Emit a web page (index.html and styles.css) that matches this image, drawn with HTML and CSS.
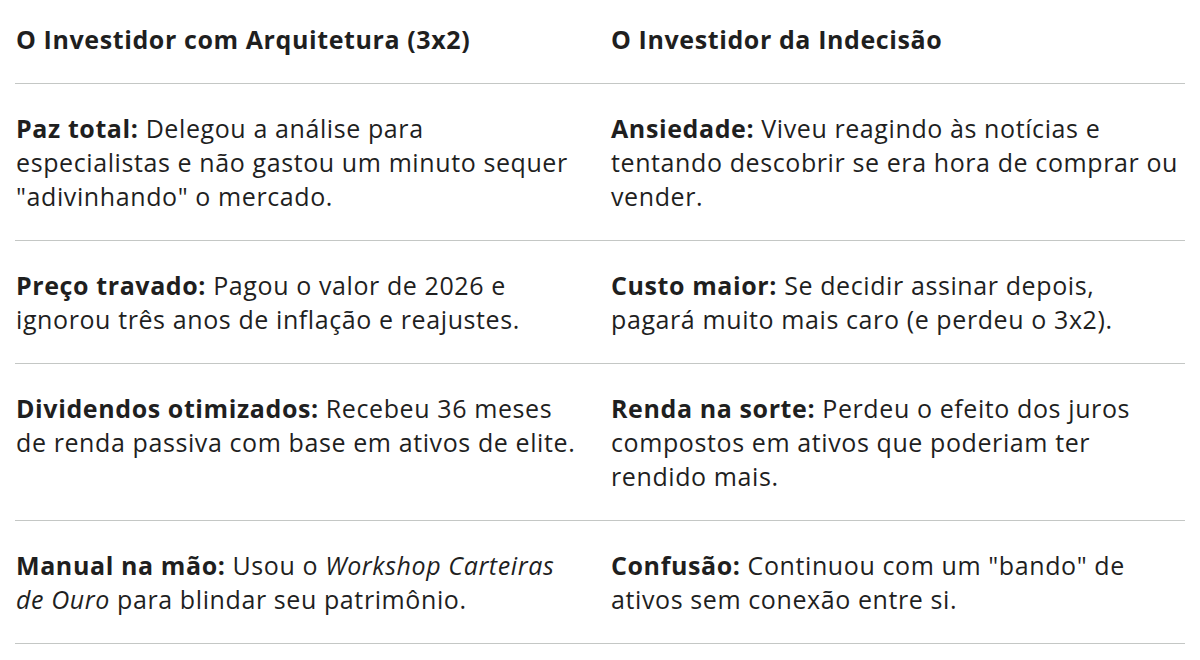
FILE: index.html
```html
<!DOCTYPE html>
<html lang="pt-BR">
<head>
<meta charset="utf-8">
<title>Comparativo</title>
<link rel="stylesheet" href="styles.css">
</head>
<body>
<div class="wrap">
<table class="cmp">
  <colgroup>
    <col class="col-a">
    <col class="col-b">
  </colgroup>
  <thead>
    <tr>
      <th>O Investidor com Arquitetura (3x2)</th>
      <th>O Investidor da Indecisão</th>
    </tr>
  </thead>
  <tbody>
    <tr>
      <td><b>Paz total:</b> Delegou a análise para especialistas e não gastou um minuto sequer "adivinhando" o mercado.</td>
      <td><b>Ansiedade:</b> Viveu reagindo às notícias e tentando descobrir se era hora de comprar ou vender.</td>
    </tr>
    <tr>
      <td><b>Preço travado:</b> Pagou o valor de 2026 e ignorou três anos de inflação e reajustes.</td>
      <td><b>Custo maior:</b> Se decidir assinar depois, pagará muito mais caro (e perdeu o 3x2).</td>
    </tr>
    <tr>
      <td><b>Dividendos otimizados:</b> Recebeu 36 meses de renda passiva com base em ativos de elite.</td>
      <td><b>Renda na sorte:</b> Perdeu o efeito dos juros compostos em ativos que poderiam ter rendido mais.</td>
    </tr>
    <tr>
      <td><b>Manual na mão:</b> Usou o <i>Workshop Carteiras de Ouro</i> para blindar seu patrimônio.</td>
      <td><b>Confusão:</b> Continuou com um "bando" de ativos sem conexão entre si.</td>
    </tr>
  </tbody>
</table>
</div>
</body>
</html>
```
FILE: styles.css
```css
html, body {
  margin: 0;
  padding: 0;
  background: #ffffff;
}
body {
  font-family: "Open Sans", "Noto Sans", "Liberation Sans", sans-serif;
  color: #1f1f1f;
  font-size: 25px;
  line-height: 34px;
  letter-spacing: 0.6px;
}
.wrap {
  padding: 0 15px;
}
.cmp {
  width: 1170px;
  border-collapse: collapse;
  table-layout: fixed;
}
.col-a {
  width: 577px;
}
.col-b {
  width: 593px;
}
.cmp th,
.cmp td {
  text-align: left;
  vertical-align: top;
  border-bottom: 1px solid #c4c7c5;
  padding: 27px 4px 27px 19px;
}
.cmp th {
  font-weight: 700;
  padding-top: 22px;
}
.cmp th:first-child,
.cmp td:first-child {
  padding-left: 1px;
  padding-right: 11px;
}
.cmp b {
  font-weight: 700;
}
.cmp i {
  font-style: italic;
}
```
